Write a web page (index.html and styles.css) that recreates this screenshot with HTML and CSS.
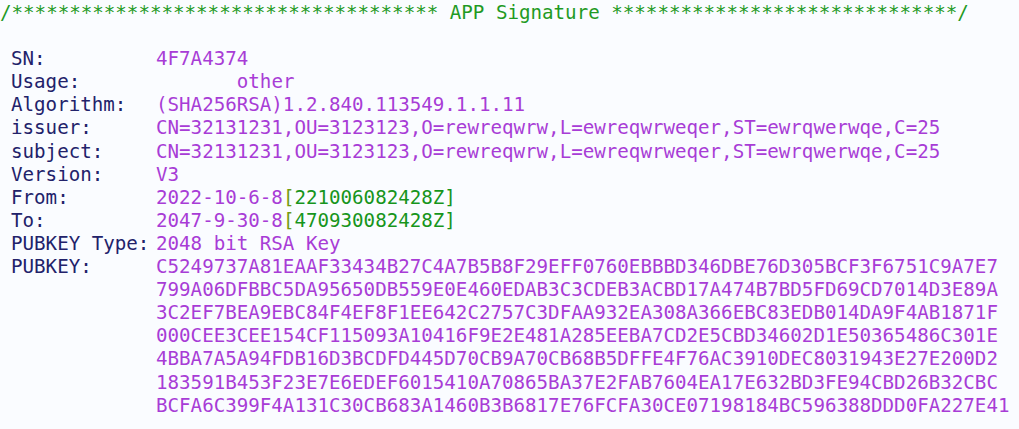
FILE: index.html
```html
<!DOCTYPE html>
<html lang="en">
<head>
<meta charset="utf-8">
<title>APP Signature</title>
<link rel="stylesheet" href="styles.css">
</head>
<body>
<main class="sig">
  <div class="banner">/************************************* APP Signature ******************************/</div>
  <dl class="fields">
    <div class="row"><dt>SN:</dt><dd>4F7A4374</dd></div>
    <div class="row"><dt>Usage:</dt><dd><span class="indent">other</span></dd></div>
    <div class="row"><dt>Algorithm:</dt><dd>(SHA256RSA)1.2.840.113549.1.1.11</dd></div>
    <div class="row"><dt>issuer:</dt><dd>CN=32131231,OU=3123123,O=rewreqwrw,L=ewreqwrweqer,ST=ewrqwerwqe,C=25</dd></div>
    <div class="row"><dt>subject:</dt><dd>CN=32131231,OU=3123123,O=rewreqwrw,L=ewreqwrweqer,ST=ewrqwerwqe,C=25</dd></div>
    <div class="row"><dt>Version:</dt><dd>V3</dd></div>
    <div class="row"><dt>From:</dt><dd>2022-10-6-8<span class="stamp"><span class="br">[</span>221006082428Z]</span></dd></div>
    <div class="row"><dt>To:</dt><dd>2047-9-30-8<span class="stamp"><span class="br">[</span>470930082428Z]</span></dd></div>
    <div class="row"><dt>PUBKEY Type:</dt><dd>2048 bit RSA Key</dd></div>
    <div class="row"><dt>PUBKEY:</dt><dd class="key">
      <span>C5249737A81EAAF33434B27C4A7B5B8F29EFF0760EBBBD346DBE76D305BCF3F6751C9A7E7</span>
      <span>799A06DFBBC5DA95650DB559E0E460EDAB3C3CDEB3ACBD17A474B7BD5FD69CD7014D3E89A</span>
      <span>3C2EF7BEA9EBC84F4EF8F1EE642C2757C3DFAA932EA308A366EBC83EDB014DA9F4AB1871F</span>
      <span>000CEE3CEE154CF115093A10416F9E2E481A285EEBA7CD2E5CBD34602D1E50365486C301E</span>
      <span>4BBA7A5A94FDB16D3BCDFD445D70CB9A70CB68B5DFFE4F76AC3910DEC8031943E27E200D2</span>
      <span>183591B453F23E7E6EDEF6015410A70865BA37E2FAB7604EA17E632BD3FE94CBD26B32CBC</span>
      <span>BCFA6C399F4A131C30CB683A1460B3B6817E76FCFA30CE07198184BC596388DDD0FA227E41</span>
    </dd></div>
  </dl>
</main>
</body>
</html>
```

FILE: styles.css
```css
html, body {
  margin: 0;
  padding: 0;
  background: #fafcff;
}

.sig {
  font-family: "DejaVu Sans Mono", "Liberation Mono", monospace;
  font-size: 19.17px;
  line-height: 23.1px;
  padding-top: 1px;
  white-space: nowrap;
}

.banner {
  color: #1f9a24;
  margin-bottom: 23.1px;
  white-space: pre;
}

.fields {
  margin: 0;
  padding-left: 11px;
}

.row {
  display: grid;
  grid-template-columns: 145px 1fr;
}

.row dt {
  color: #22226a;
}

.row dd {
  margin: 0;
  color: #a83cd6;
}

.indent {
  padding-left: 80.8px;
}

.stamp {
  color: #17951c;
}

.stamp .br {
  color: #6f9a12;
}

.key {
  display: flex;
  flex-direction: column;
}
```
